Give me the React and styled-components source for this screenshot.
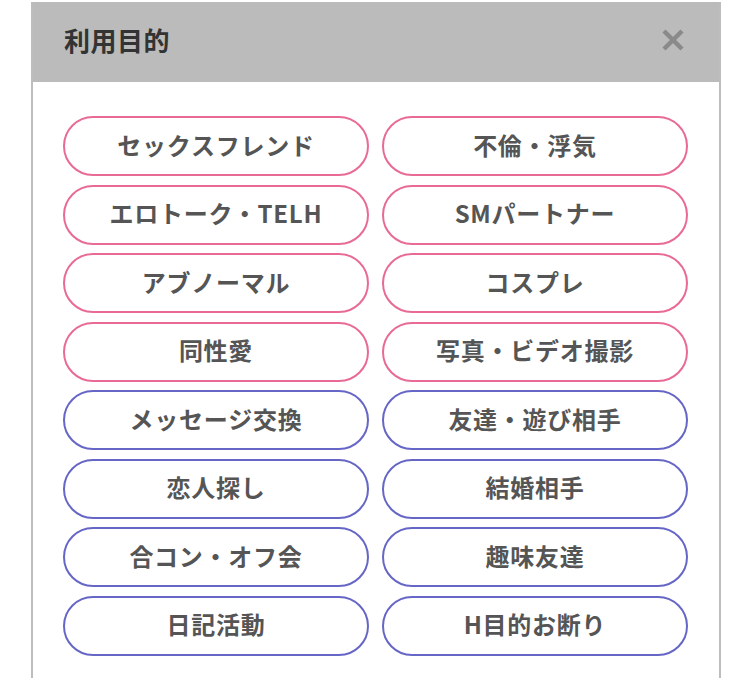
import React from 'react'
import styled, { createGlobalStyle, css } from 'styled-components'

const PURPOSES = [
  { label: 'セックスフレンド', tone: 'pink' },
  { label: '不倫・浮気', tone: 'pink' },
  { label: 'エロトーク・TELH', tone: 'pink' },
  { label: 'SMパートナー', tone: 'pink' },
  { label: 'アブノーマル', tone: 'pink' },
  { label: 'コスプレ', tone: 'pink' },
  { label: '同性愛', tone: 'pink' },
  { label: '写真・ビデオ撮影', tone: 'pink' },
  { label: 'メッセージ交換', tone: 'purple' },
  { label: '友達・遊び相手', tone: 'purple' },
  { label: '恋人探し', tone: 'purple' },
  { label: '結婚相手', tone: 'purple' },
  { label: '合コン・オフ会', tone: 'purple' },
  { label: '趣味友達', tone: 'purple' },
  { label: '日記活動', tone: 'purple' },
  { label: 'H目的お断り', tone: 'purple' },
]

const CloseIcon = () => (
  <svg width="24" height="24" viewBox="0 0 24 24">
    <path d="M3 3 L21 21 M21 3 L3 21" stroke="#8a8a8a" strokeWidth="4.5" strokeLinecap="butt" />
  </svg>
)

const App = () => {
  return (
    <>
      <GlobalStyle />
      <Page>
        <Panel>
          <Header>
            <Title>利用目的</Title>
            <CloseButton aria-label="close">
              <CloseIcon />
            </CloseButton>
          </Header>
          <Body>
            {PURPOSES.map((item) => (
              <Chip key={item.label} tone={item.tone}>
                {item.label}
              </Chip>
            ))}
          </Body>
        </Panel>
      </Page>
    </>
  )
}

export default App

/**
 * Styles
 */

const GlobalStyle = createGlobalStyle`
  html, body {
    margin: 0;
    padding: 0;
    background: #ffffff;
  }
  body {
    font-family: "Noto Sans CJK JP", "Noto Sans", sans-serif;
  }
`

const Page = styled.div`
  width: 750px;
  height: 678px;
  overflow: hidden;
  padding: 2px 0 0 31px;
  box-sizing: border-box;
`

const Panel = styled.div`
  width: 690px;
  border-left: 2px solid #bdbdbd;
  border-right: 2px solid #bdbdbd;
  box-sizing: border-box;
  background: #ffffff;
  min-height: 700px;
`

const Header = styled.div`
  height: 80px;
  background: #bbbbbb;
  display: flex;
  align-items: center;
  justify-content: space-between;
  padding: 0 34px 4px 31px;
  box-sizing: border-box;
`

const Title = styled.h2`
  margin: 0;
  font-size: 26px;
  line-height: 1;
  font-weight: 700;
  color: #333333;
  letter-spacing: 0.5px;
`

const CloseButton = styled.button`
  border: none;
  background: none;
  padding: 0;
  display: flex;
  cursor: pointer;
`

const Body = styled.div`
  display: grid;
  grid-template-columns: 306px 306px;
  column-gap: 13px;
  row-gap: 8.5px;
  padding: 34px 0 0 30px;
`

const Chip = styled.button`
  height: 60px;
  box-sizing: border-box;
  border-radius: 30px;
  background: #ffffff;
  border: 2px solid;
  font-family: "Noto Sans CJK JP", "Noto Sans", sans-serif;
  font-size: 24px;
  line-height: 1;
  font-weight: 700;
  color: #555555;
  letter-spacing: 0.75px;
  display: flex;
  align-items: center;
  justify-content: center;
  padding: 0 0 3px;
  cursor: pointer;

  ${({ tone }) =>
    tone === 'pink'
      ? css`
          border-color: #e86a95;
        `
      : css`
          border-color: #6666c6;
        `};
`
